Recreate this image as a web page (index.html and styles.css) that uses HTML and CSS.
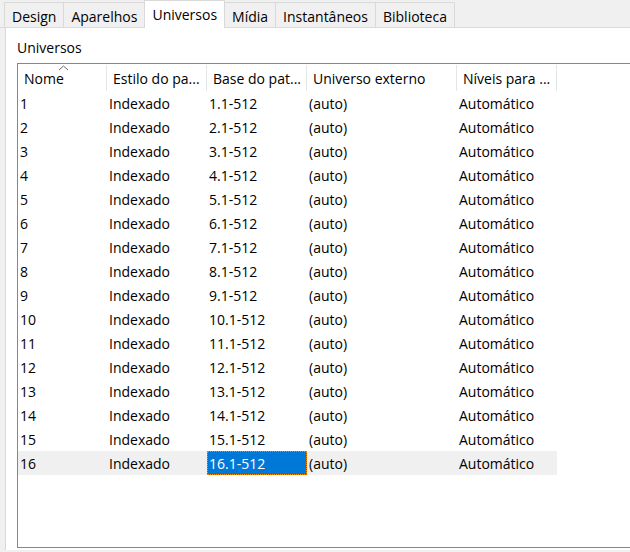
FILE: index.html
```html
<!DOCTYPE html>
<html lang="pt">
<head>
<meta charset="utf-8">
<link rel="stylesheet" href="styles.css">
</head>
<body>
<div class="tabs">
  <div class="tab">Design</div>
  <div class="tab">Aparelhos</div>
  <div class="tab active">Universos</div>
  <div class="tab">Mídia</div>
  <div class="tab">Instantâneos</div>
  <div class="tab">Biblioteca</div>
</div>
<div class="panel">
  <div class="group-label">Universos</div>
  <div class="listbox">
    <div class="header">
      <div class="hcell c1">Nome
        <svg class="sort" width="11" height="6" viewBox="0 0 11 6"><path d="M1 5 L5.5 1 L10 5" fill="none" stroke="#6d6d6d" stroke-width="1"/></svg>
      </div>
      <div class="hcell c2">Estilo do pa...</div>
      <div class="hcell c3">Base do pat...</div>
      <div class="hcell c4">Universo externo</div>
      <div class="hcell c5">Níveis para ...</div>
    </div>
    <div class="rows" id="rows"></div>
  </div>
</div>
<script src="app.js"></script>
</body>
</html>
```
FILE: app.js
```js
var rows = document.getElementById('rows');
for (var i = 1; i <= 16; i++) {
  var r = document.createElement('div');
  r.className = 'row' + (i === 16 ? ' current' : '');
  r.innerHTML =
    '<div class="cell c1">' + i + '</div>' +
    '<div class="cell c2">Indexado</div>' +
    '<div class="cell c3' + (i === 16 ? ' selected' : '') + '">' + i + '.1-512</div>' +
    '<div class="cell c4">(auto)</div>' +
    '<div class="cell c5">Automático</div>';
  rows.appendChild(r);
}
```
FILE: styles.css
```css
html, body {
  margin: 0;
  padding: 0;
  background: #f0f0f0;
  overflow: hidden;
  width: 630px;
  height: 552px;
}
body {
  font-family: "Open Sans", "Noto Sans", sans-serif;
  font-size: 14px;
  color: #000;
}
.tabs {
  display: flex;
  align-items: flex-end;
  padding-left: 4px;
  border-bottom: 1px solid #d9d9d9;
  box-sizing: border-box;
  height: 28px;
}
.tab {
  height: 25px;
  line-height: 25px;
  padding: 1px 7px 0;
  border: 1px solid #d9d9d9;
  border-bottom: none;
  margin-left: -1px;
  background: #f0f0f0;
  box-sizing: border-box;
  white-space: nowrap;
}
.tab:first-child { margin-left: 0; }
.tab.active {
  height: 28px;
  line-height: 27px;
  padding-top: 0;
  background: #fff;
  margin-bottom: -1px;
  position: relative;
  z-index: 1;
}
.panel {
  margin-left: 5px;
  border-left: 1px solid #d9d9d9;
  background: #fff;
  height: 522px;
  padding-left: 11px;
  box-sizing: border-box;
}
.group-label {
  height: 35px;
  line-height: 40px;
}
.listbox {
  height: 485px;
  border: 1px solid #828790;
  border-right: none;
  box-sizing: border-box;
  background: #fff;
}
.header {
  display: flex;
  height: 27px;
}
.hcell {
  position: relative;
  box-sizing: border-box;
  border-right: 1px solid #e5e5e5;
  margin: 1px 0 0;
  padding-left: 6px;
  line-height: 28px;
  height: 26px;
  white-space: nowrap;
}
.c1 { width: 89px; }
.c2 { width: 100px; }
.c3 { width: 100px; }
.c4 { width: 150px; }
.c5 { width: 100px; }
.sort {
  position: absolute;
  left: 40px;
  top: 0;
}
.row {
  display: flex;
  height: 24px;
  width: 539px;
}
.row.current { background: #f0f0f0; }
.cell {
  box-sizing: border-box;
  height: 24px;
  line-height: 26px;
  padding-left: 2px;
  white-space: nowrap;
}
.cell.selected {
  background: #0078d7;
  color: #fff;
  outline: 1px dotted #ff8800;
  outline-offset: -1px;
}
```
